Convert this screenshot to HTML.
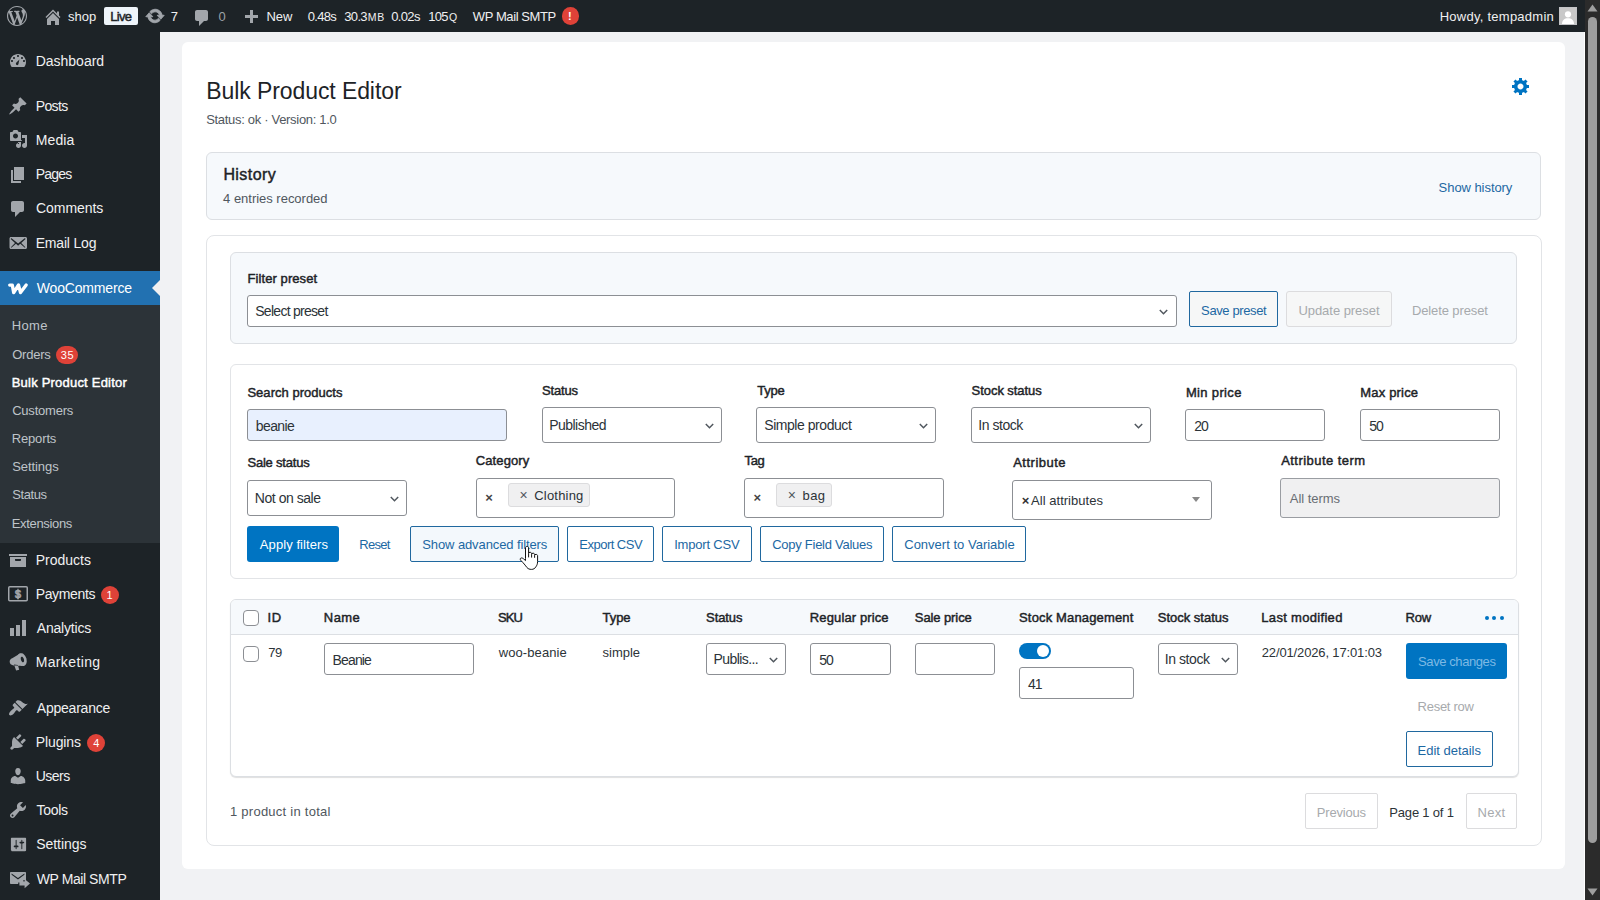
<!DOCTYPE html>
<html lang="en">
<head>
<meta charset="utf-8">
<title>Bulk Product Editor</title>
<style>
html,body{margin:0;padding:0;}
body{width:1600px;height:900px;overflow:hidden;position:relative;background:#f1f2f4;font-family:"Liberation Sans",sans-serif;}
.b{position:absolute;box-sizing:border-box;}
.t{position:absolute;white-space:nowrap;font-family:"Liberation Sans",sans-serif;}
svg{position:absolute;overflow:visible;}
</style>
</head>
<body>
<div class="b" style="left:0px;top:0px;width:1600px;height:32px;background:#1d2327;"></div>
<div class="b" style="left:0px;top:32px;width:160px;height:868px;background:#1d2327;"></div>
<div class="b" style="left:182px;top:42px;width:1383px;height:827px;background:#fff;border-radius:6px;"></div>
<div class="b" style="left:1584px;top:32px;width:1px;height:868px;background:#fff;"></div>
<div class="b" style="left:1585px;top:0px;width:15px;height:900px;background:#2b2b2b;"></div>
<div class="b" style="left:1588px;top:17px;width:9px;height:826px;background:#9e9e9e;border-radius:5px;"></div>
<svg style="left:1587px;top:4px" width="11" height="8" viewBox="0 0 11 8"><path fill="#9e9e9e" d="M5.5 0.5L10.5 7.500H0.500z"/></svg>
<svg style="left:1587px;top:888px" width="11" height="8" viewBox="0 0 11 8"><path fill="#9e9e9e" d="M0.500 0.500H10.500L5.500 7.500z"/></svg>
<svg style="left:7px;top:6px" width="20" height="20" viewBox="0 0 20 20"><path fill="#a2a6ab" fill-rule="evenodd"  d="M20 10c0-5.510-4.490-10-10-10s-10 4.490-10 10 4.490 10 10 10 10-4.490 10-10zM7.780 15.370l-3.410-9.170c0.550-0.020 1.170-0.080 1.170-0.080 0.500-0.060 0.440-1.130-0.060-1.110 0 0-1.450 0.110-2.370 0.110-0.180 0-0.370 0-0.580-0.010 1.580-2.430 4.330-4.010 7.470-4.010 2.330 0 4.450 0.870 6.050 2.340-0.680-0.110-1.650 0.390-1.650 1.580 0 0.740 0.450 1.360 0.900 2.100 0.350 0.610 0.550 1.360 0.550 2.460 0 1.490-1.400 5-1.400 5l-3.030-8.380c0.540-0.020 0.820-0.170 0.820-0.170 0.500-0.050 0.440-1.250-0.060-1.220 0 0-1.440 0.120-2.380 0.120-0.870 0-2.330-0.120-2.330-0.120-0.500-0.030-0.560 1.200-0.060 1.220l0.920 0.080 1.260 3.410zM17.410 10c0.240-0.640 0.740-1.870 0.430-4.250 0.700 1.290 1.050 2.710 1.050 4.250 0 3.290-1.730 6.240-4.400 7.780 0.970-2.590 1.940-5.200 2.920-7.780zM6.100 18.090c-2.980-1.440-4.990-4.550-4.990-8.090 0-1.300 0.230-2.480 0.720-3.590 1.420 3.890 2.840 7.790 4.270 11.680zM10.130 11.460l2.580 6.980c-0.860 0.290-1.760 0.450-2.710 0.450-0.790 0-1.570-0.110-2.290-0.330 0.810-2.380 1.620-4.740 2.420-7.100z"/></svg>
<svg style="left:42.5px;top:6.5px" width="20" height="20" viewBox="0 0 20 20"><path fill="#a2a6ab" fill-rule="evenodd"  d="M16 8.500l1.530 1.530-1.060 1.060-6.470-6.470-6.470 6.470-1.060-1.060 7.530-7.530 4 4v-2h2v4zM10 6.040l6 5.990v5.970h-4v-4h-4v4h-4v-5.970z"/></svg>
<span class="t" style="left:68.04px;top:7px;font-size:13px;line-height:20px;color:#f0f0f1;letter-spacing:-0.03px;">shop</span>
<div class="b" style="left:104px;top:7px;width:34px;height:18px;background:#eef4fa;border-radius:2px;"></div>
<span class="t" style="left:110.33px;top:7px;font-size:13px;line-height:20px;-webkit-text-stroke:0.45px;color:#1d2327;letter-spacing:-0.77px;">Live</span>
<svg style="left:144.7px;top:6.3px" width="20" height="20" viewBox="0 0 20 20"><path fill="#a2a6ab" fill-rule="evenodd" stroke="#a2a6ab" stroke-width="0.900" d="M10.200 3.280c3.530 0 6.430 2.610 6.920 6h2.080l-3.500 4-3.500-4h2.320c-0.450-1.970-2.210-3.450-4.320-3.450-1.450 0-2.730 0.710-3.540 1.780l-1.720-1.970c1.280-1.450 3.160-2.360 5.260-2.360zM9.800 16.720c-3.520 0-6.430-2.610-6.920-6h-2.080l3.500-4c1.170 1.330 2.330 2.670 3.500 4h-2.320c0.450 1.970 2.210 3.450 4.320 3.450 1.450 0 2.730-0.710 3.540-1.780l1.720 1.970c-1.280 1.450-3.160 2.360-5.260 2.360z"/></svg>
<span class="t" style="left:170.73px;top:7px;font-size:13px;line-height:20px;color:#f0f0f1;">7</span>
<svg style="left:192px;top:8.3px" width="20" height="20" viewBox="0 0 20 20"><path fill="#a2a6ab" fill-rule="evenodd"  d="M5 2h9c1.100 0 2 0.900 2 2v7c0 1.100-0.900 2-2 2h-2l-5 5v-5h-2c-1.100 0-2-0.900-2-2v-7c0-1.100 0.900-2 2-2z"/></svg>
<span class="t" style="left:218.39px;top:7px;font-size:13px;line-height:20px;color:#9ca2a7;">0</span>
<svg style="left:240.5px;top:7.5px" width="20" height="20" viewBox="0 0 20 20"><path fill="#a2a6ab" fill-rule="evenodd"  d="M17 7v3h-5v5h-3v-5h-5v-3h5v-5h3v5h5z"/></svg>
<span class="t" style="left:266.53px;top:7px;font-size:13px;line-height:20px;color:#f0f0f1;letter-spacing:-0.04px;">New</span>
<span class="t" style="left:307.69px;top:7px;font-size:13px;line-height:20px;color:#f0f0f1;letter-spacing:-0.68px;">0.48s</span>
<span class="t" style="left:344.30px;top:7px;font-size:13px;line-height:20px;color:#f0f0f1;letter-spacing:-0.68px;">30.3</span>
<span class="t" style="left:367.74px;top:9px;font-size:10.5px;line-height:16px;color:#f0f0f1;letter-spacing:0.70px;">MB</span>
<span class="t" style="left:391.19px;top:7px;font-size:13px;line-height:20px;color:#f0f0f1;letter-spacing:-0.63px;">0.02s</span>
<span class="t" style="left:428.21px;top:7px;font-size:13px;line-height:20px;color:#f0f0f1;letter-spacing:-0.68px;">105</span>
<span class="t" style="left:448.90px;top:9px;font-size:10.5px;line-height:16px;color:#f0f0f1;">Q</span>
<span class="t" style="left:472.84px;top:7px;font-size:13px;line-height:20px;color:#f0f0f1;letter-spacing:-0.41px;">WP Mail SMTP</span>
<div class="b" style="left:561.5px;top:7.2px;width:17.6px;height:17.6px;background:#df4238;border-radius:50%;"></div>
<span class="t" style="left:568.06px;top:8px;font-size:11px;line-height:16px;font-weight:700;color:#fff;">!</span>
<span class="t" style="left:1439.73px;top:7px;font-size:13px;line-height:20px;color:#f0f0f1;letter-spacing:0.25px;">Howdy, tempadmin</span>
<div class="b" style="left:1559px;top:7px;width:18px;height:18px;background:#c3c4c7;"></div>
<svg style="left:1560px;top:8px" width="16" height="16" viewBox="0 0 16 16"><rect width="16" height="16" fill="#c8c8c8"/><circle cx="8" cy="6.300" r="3.100" fill="#fff"/><path fill="#fff" d="M2 16c0-4 2.500-5.800 6-5.800s6 1.800 6 5.800z"/></svg>
<svg style="left:8px;top:51px" width="20" height="20" viewBox="0 0 20 20"><path fill="#a2a6ab" fill-rule="evenodd"  d="M3.760 16h12.480c1.100-1.370 1.760-3.110 1.760-5 0-4.420-3.580-8-8-8s-8 3.580-8 8c0 1.890 0.660 3.630 1.760 5zM10 4c0.550 0 1 0.450 1 1s-0.450 1-1 1-1-0.450-1-1 0.450-1 1-1zM6 6c0.550 0 1 0.450 1 1s-0.450 1-1 1-1-0.450-1-1 0.450-1 1-1zM14 6c0.550 0 1 0.450 1 1s-0.450 1-1 1-1-0.450-1-1 0.450-1 1-1zM8.370 11.620c0.810-0.750 3.050-3.120 3.050-3.120s-0.690 3.150-0.880 4.250c-0.190 1.090-1.060 1.690-1.880 1.250s-1.100-1.620-0.290-2.380zM4 9c0.550 0 1 0.450 1 1s-0.450 1-1 1-1-0.450-1-1 0.450-1 1-1zM16 9c0.550 0 1 0.450 1 1s-0.450 1-1 1-1-0.450-1-1 0.450-1 1-1z"/></svg>
<span class="t" style="left:35.65px;top:51px;font-size:14px;line-height:21px;color:#f0f0f1;">Dashboard</span>
<svg style="left:8px;top:96px" width="20" height="20" viewBox="0 0 20 20"><path fill="#a2a6ab" fill-rule="evenodd"  d="M10.440 3.020l1.820-1.820 6.360 6.350-1.830 1.820c-1.050-0.680-2.480-0.570-3.410 0.360l-0.750 0.750c-0.920 0.930-1.040 2.350-0.350 3.410l-1.830 1.820-2.410-2.410-2.800 2.790c-0.420 0.420-3.380 2.710-3.800 2.290s1.860-3.390 2.280-3.810l2.790-2.790-2.410-2.410 1.830-1.820c1.050 0.690 2.480 0.570 3.400-0.360l0.750-0.750c0.930-0.920 1.050-2.350 0.360-3.400z"/></svg>
<span class="t" style="left:35.65px;top:96px;font-size:14px;line-height:21px;color:#f0f0f1;letter-spacing:-0.57px;">Posts</span>
<svg style="left:7.5px;top:129px" width="20" height="20" viewBox="0 0 20 20"><path fill="#a2a6ab" fill-rule="evenodd"  d="M13 11v-7c0-0.550-0.450-1-1-1h-1.330l-1.340-2h-3.660l-1.340 2h-1.330c-0.550 0-1 0.450-1 1v7c0 0.550 0.450 1 1 1h10c0.550 0 1-0.450 1-1zM7.500 4.500c1.380 0 2.500 1.120 2.500 2.500s-1.120 2.500-2.500 2.500-2.500-1.120-2.500-2.500 1.120-2.500 2.500-2.500zM14 6h5v10.500c0 1.380-1.120 2.500-2.500 2.500s-2.500-1.120-2.500-2.500 1.120-2.500 2.500-2.500c0.170 0 0.340 0.020 0.500 0.050v-5.050h-3v-3zM10 14v-1h3v3.500c0 1.380-1.120 2.500-2.500 2.500s-2.500-1.120-2.500-2.500 1.120-2.500 2.500-2.500c0.170 0 0.340 0.020 0.500 0.050v0.950h-1z"/></svg>
<span class="t" style="left:35.65px;top:130px;font-size:14px;line-height:21px;color:#f0f0f1;letter-spacing:0.15px;">Media</span>
<svg style="left:8px;top:164.5px" width="20" height="20" viewBox="0 0 20 20"><path fill="#a2a6ab" fill-rule="evenodd"  d="M6 15v-13h10v13h-10zM5 16h8v2h-10v-13h2v11z"/></svg>
<span class="t" style="left:35.65px;top:164px;font-size:14px;line-height:21px;color:#f0f0f1;letter-spacing:-0.76px;">Pages</span>
<svg style="left:8px;top:198.5px" width="20" height="20" viewBox="0 0 20 20"><path fill="#a2a6ab" fill-rule="evenodd"  d="M5 2h9c1.100 0 2 0.900 2 2v7c0 1.100-0.900 2-2 2h-2l-5 5v-5h-2c-1.100 0-2-0.900-2-2v-7c0-1.100 0.900-2 2-2z"/></svg>
<span class="t" style="left:36.09px;top:198px;font-size:14px;line-height:21px;color:#f0f0f1;letter-spacing:-0.07px;">Comments</span>
<svg style="left:8.3px;top:233px" width="20" height="20" viewBox="0 0 20 20"><path fill="#a2a6ab" fill-rule="evenodd"  d="M19 14.500v-9c0-0.830-0.670-1.500-1.500-1.500h-14.500c-0.830 0-1.500 0.670-1.500 1.500v9c0 0.830 0.670 1.500 1.500 1.500h14.500c0.830 0 1.500-0.670 1.500-1.500zM17.310 5.390c0.330 0.330 0.150 0.670-0.030 0.840l-4.060 3.720 3.900 4.060c0.120 0.140 0.200 0.360 0.060 0.510-0.130 0.160-0.430 0.150-0.560 0.050l-4.370-3.730-2.140 1.950-2.130-1.950-4.370 3.730c-0.130 0.100-0.430 0.110-0.560-0.050-0.140-0.150-0.060-0.370 0.060-0.510l3.900-4.060-4.060-3.720c-0.180-0.170-0.360-0.510-0.030-0.840s0.670-0.170 0.950 0.070l6.240 5.040 6.250-5.040c0.280-0.240 0.620-0.400 0.950-0.070z"/></svg>
<span class="t" style="left:35.65px;top:233px;font-size:14px;line-height:21px;color:#f0f0f1;letter-spacing:-0.18px;">Email Log</span>
<div class="b" style="left:0px;top:271px;width:160px;height:34px;background:#2271b1;"></div>
<svg style="left:152px;top:280px" width="8" height="16" viewBox="0 0 8 16"><path fill="#f0f0f1" d="M8 0L0 8l8 8z"/></svg>
<svg style="left:8px;top:282.500px" width="20" height="11.500" viewBox="0 0 20 11.500"><path fill="none" stroke="#fff" stroke-width="3.300" stroke-linecap="round" stroke-linejoin="round" d="M1.700 2.100H4.300L5.700 9.600L10.500 2L12.500 9.600L18.200 2"/></svg>
<span class="t" style="left:36.74px;top:278px;font-size:14px;line-height:21px;color:#fff;letter-spacing:-0.17px;">WooCommerce</span>
<div class="b" style="left:0px;top:305px;width:160px;height:238px;background:#2c3338;"></div>
<span class="t" style="left:11.73px;top:316px;font-size:13px;line-height:20px;color:#bfc4c9;letter-spacing:0.35px;">Home</span>
<span class="t" style="left:12.18px;top:345px;font-size:13px;line-height:20px;color:#bfc4c9;letter-spacing:-0.21px;">Orders</span>
<div class="b" style="left:56.3px;top:346px;width:21.7px;height:18px;background:#df4238;border-radius:9px;"></div>
<span class="t" style="left:60.78px;top:347px;font-size:11px;line-height:16px;color:#fff;letter-spacing:0.70px;">35</span>
<span class="t" style="left:11.73px;top:373px;font-size:13px;line-height:20px;-webkit-text-stroke:0.45px;color:#fff;letter-spacing:0.21px;">Bulk Product Editor</span>
<span class="t" style="left:12.14px;top:401px;font-size:13px;line-height:20px;color:#bfc4c9;letter-spacing:-0.20px;">Customers</span>
<span class="t" style="left:11.73px;top:429px;font-size:13px;line-height:20px;color:#bfc4c9;letter-spacing:-0.15px;">Reports</span>
<span class="t" style="left:12.21px;top:457px;font-size:13px;line-height:20px;color:#bfc4c9;letter-spacing:-0.07px;">Settings</span>
<span class="t" style="left:12.21px;top:485px;font-size:13px;line-height:20px;color:#bfc4c9;letter-spacing:-0.40px;">Status</span>
<span class="t" style="left:11.73px;top:514px;font-size:13px;line-height:20px;color:#bfc4c9;letter-spacing:-0.33px;">Extensions</span>
<svg style="left:8.3px;top:550px" width="20" height="20" viewBox="0 0 20 20"><path fill="#a2a6ab" fill-rule="evenodd"  d="M19 4v2h-18v-2h18zM2 7h16v10h-16v-10zM13 10v-1h-6v1c0 0.550 0.450 1 1 1h4c0.550 0 1-0.450 1-1z"/></svg>
<span class="t" style="left:35.65px;top:550px;font-size:14px;line-height:21px;color:#f0f0f1;">Products</span>
<svg style="left:8px;top:586px" width="20" height="16" viewBox="0 0 20 16"><rect x="0.750" y="0.750" width="18.500" height="14" rx="1" fill="none" stroke="#a2a6ab" stroke-width="1.500"/><text x="10" y="12.200" text-anchor="middle" font-family="Liberation Sans, sans-serif" font-weight="700" font-size="11.500" fill="#a2a6ab" stroke="#a2a6ab" stroke-width="0.400">$</text><path d="M10 2.800v10.400" stroke="#a2a6ab" stroke-width="1.100"/></svg>
<span class="t" style="left:35.65px;top:584px;font-size:14px;line-height:21px;color:#f0f0f1;letter-spacing:-0.34px;">Payments</span>
<div class="b" style="left:101px;top:586px;width:18px;height:18px;background:#df4238;border-radius:9px;"></div>
<span class="t" style="left:106.56px;top:587px;font-size:11px;line-height:16px;color:#fff;">1</span>
<svg style="left:8px;top:618px" width="20" height="20" viewBox="0 0 20 20"><path fill="#a2a6ab" fill-rule="evenodd"  d="M18 18v-16h-4v16h4zM12 18v-11h-4v11h4zM6 18v-8h-4v8h4z"/></svg>
<span class="t" style="left:36.77px;top:618px;font-size:14px;line-height:21px;color:#f0f0f1;letter-spacing:-0.20px;">Analytics</span>
<svg style="left:8px;top:652px" width="20" height="20" viewBox="0 0 20 20"><path fill="#a2a6ab" d="M12.2 1.6L4.2 6.300C2.600 6.800 1.500 8.300 1.700 10.100C1.900 11.900 3.100 13.100 4.800 13.200L14.800 14.100zM6 12.600L9.900 13L11.200 17.800L8.100 18.500z"/><path fill="#a2a6ab" d="M18.30 6.28L18.62 7.72L18.71 9.15L18.57 10.51L18.19 11.71L17.61 12.72L16.84 13.46L15.93 13.91L14.92 14.05L13.87 13.86L12.83 13.35L11.84 12.56L10.96 11.52L10.23 10.29L9.70 8.92L9.38 7.48L9.29 6.05L9.43 4.69L9.81 3.49L10.39 2.48L11.16 1.74L12.07 1.29L13.08 1.15L14.13 1.34L15.17 1.85L16.16 2.64L17.04 3.68L17.77 4.91z"/><path fill="#1d2327" d="M15.83 7.06L15.99 7.69L16.06 8.31L16.05 8.89L15.96 9.39L15.79 9.81L15.55 10.11L15.25 10.27L14.91 10.30L14.54 10.19L14.17 9.94L13.81 9.57L13.48 9.10L13.19 8.54L12.97 7.94L12.81 7.31L12.74 6.69L12.75 6.11L12.84 5.61L13.01 5.19L13.25 4.89L13.55 4.73L13.89 4.70L14.26 4.81L14.63 5.06L14.99 5.43L15.32 5.90L15.61 6.46z"/></svg>
<span class="t" style="left:35.65px;top:652px;font-size:14px;line-height:21px;color:#f0f0f1;letter-spacing:0.37px;">Marketing</span>
<svg style="left:8px;top:697.5px" width="20" height="20" viewBox="0 0 20 20"><path fill="#a2a6ab" fill-rule="evenodd"  d="M14.48 11.06L7.41 3.99l1.5-1.5c.5-.56 2.3-.47 3.51.32 1.21.8 1.43 1.28 2.91 2.1 1.18.64 2.45 1.26 4.45.85zm-.71.71L6.700 4.700 4.930 6.470c-.39.39-.39 1.020 0 1.410l1.060 1.060c.39.39.39 1.030 0 1.420-.6.6-1.430 1.110-2.210 1.690-.35.26-.7.53-1.010.84C1.430 14.230.4 16.080 1.400 17.070c.99 1 2.840-.03 4.180-1.360.31-.31.58-.66.85-1.020.57-.78 1.080-1.610 1.690-2.210.39-.39 1.020-.39 1.410 0l1.060 1.060c.39.39 1.020.39 1.410 0z"/></svg>
<span class="t" style="left:36.77px;top:698px;font-size:14px;line-height:21px;color:#f0f0f1;letter-spacing:-0.22px;">Appearance</span>
<svg style="left:8px;top:731.5px" width="20" height="20" viewBox="0 0 20 20"><path fill="#a2a6ab" fill-rule="evenodd"  d="M13.11 4.360L9.870 7.600 8 5.730l3.240-3.240c.35-.34 1.050-.2 1.560.32.52.51.66 1.210.31 1.550zm-8 1.770l.91-1.120 9.010 9.010-1.190.84c-.71.71-2.630 1.160-3.820 1.160H6.140L4.900 17.260c-.59.59-1.540.59-2.120 0-.59-.58-.59-1.530 0-2.120l1.240-1.240v-3.880c0-1.130.4-3.190 1.090-3.890zm7.260 3.970l3.240-3.240c.34-.35 1.040-.21 1.550.31.52.51.66 1.210.31 1.550l-3.240 3.250z"/></svg>
<span class="t" style="left:35.65px;top:732px;font-size:14px;line-height:21px;color:#f0f0f1;letter-spacing:-0.08px;">Plugins</span>
<div class="b" style="left:87px;top:734px;width:18px;height:18px;background:#df4238;border-radius:9px;"></div>
<span class="t" style="left:93.15px;top:735px;font-size:11px;line-height:16px;color:#fff;">4</span>
<svg style="left:8px;top:765.5px" width="20" height="20" viewBox="0 0 20 20"><path fill="#a2a6ab" fill-rule="evenodd"  d="M10 9.250c-2.270 0-2.730-3.440-2.730-3.440-0.270-1.790 0.550-3.810 2.700-3.810 2.160 0 2.980 2.020 2.710 3.810 0 0-0.410 3.440-2.680 3.440zM10 11.820l2.720-1.820c2.390 0 4.520 2.330 4.520 4.530v2.490s-3.650 1.130-7.240 1.130c-3.650 0-7.240-1.130-7.240-1.130v-2.490c0-2.250 1.940-4.480 4.470-4.480z"/></svg>
<span class="t" style="left:35.72px;top:766px;font-size:14px;line-height:21px;color:#f0f0f1;letter-spacing:-0.52px;">Users</span>
<svg style="left:8px;top:799.5px" width="20" height="20" viewBox="0 0 20 20"><path fill="#a2a6ab" fill-rule="evenodd"  d="M16.680 9.770c-1.340 1.340-3.300 1.670-4.950 0.990l-5.410 6.520c-0.990 0.990-2.590 0.990-3.580 0s-0.990-2.590 0-3.570l6.520-5.420c-0.680-1.650-0.350-3.610 0.990-4.950 1.280-1.280 3.120-1.620 4.720-1.060l-2.890 2.890 2.820 2.820 2.860-2.870c0.530 1.580 0.180 3.390-1.080 4.650zM3.810 16.210c0.400 0.390 1.040 0.390 1.430 0 0.400-0.400 0.400-1.040 0-1.430-0.390-0.400-1.030-0.400-1.430 0-0.390 0.390-0.390 1.030 0 1.430z"/></svg>
<span class="t" style="left:36.49px;top:800px;font-size:14px;line-height:21px;color:#f0f0f1;letter-spacing:-0.27px;">Tools</span>
<svg style="left:8.9px;top:834.5px" width="19" height="19" viewBox="0 0 20 20"><path fill="#a2a6ab" fill-rule="evenodd"  d="M18 16V4c0-.55-.45-1-1-1H3c-.55 0-1 .45-1 1v12c0 .55.45 1 1 1h14c.55 0 1-.45 1-1zM8 11h1c.55 0 1 .45 1 1s-.45 1-1 1H8v1.500c0 .28-.22.5-.5.5s-.5-.22-.5-.5V13H6c-.55 0-1-.45-1-1s.45-1 1-1h1V5.500c0-.28.22-.5.5-.5s.5.22.5.5V11zm5-2h-1c-.55 0-1-.45-1-1s.45-1 1-1h1V5.500c0-.28.22-.5.5-.5s.5.22.5.5V7h1c.55 0 1 .45 1 1s-.45 1-1 1h-1v5.500c0 .28-.22.5-.5.5s-.5-.22-.5-.5V9z"/></svg>
<span class="t" style="left:36.16px;top:834px;font-size:14px;line-height:21px;color:#f0f0f1;letter-spacing:-0.04px;">Settings</span>
<svg style="left:10px;top:871.500px" width="20" height="16.500" viewBox="0 0 20 16.500"><path fill="#a2a6ab" d="M0 0.800C0 0.400 0.400 0 0.800 0h14.400c0.400 0 0.800 0.400 0.800 0.800v7.200h-2.600v2.600h-5.200v1.400H0.800C0.400 12 0 11.600 0 11.200zM1.600 1.500v1.300L8 7.400l6.400-4.600V1.500L8 6z"/><path fill="#a2a6ab" d="M9.400 9.600h5.200V7l5.400 4.600-5.400 4.600v-2.700H9.400z"/></svg>
<span class="t" style="left:36.74px;top:869px;font-size:14px;line-height:21px;color:#f0f0f1;letter-spacing:-0.42px;">WP Mail SMTP</span>
<span class="t" style="left:206.31px;top:74px;font-size:23px;line-height:34px;color:#1d2327;letter-spacing:-0.09px;">Bulk Product Editor</span>
<span class="t" style="left:206.21px;top:110px;font-size:13px;line-height:20px;color:#50575e;letter-spacing:-0.31px;">Status: ok · Version: 1.0</span>
<svg style="left:1511px;top:76px" width="20" height="20" viewBox="0 0 20 20"><path fill="#0074c2" fill-rule="evenodd"  d="M18 12h-2.180c-0.170 0.700-0.440 1.350-0.810 1.930l1.540 1.540-2.100 2.100-1.540-1.540c-0.580 0.360-1.230 0.630-1.910 0.790v2.180h-3v-2.180c-0.680-0.160-1.330-0.430-1.910-0.790l-1.540 1.540-2.120-2.120 1.540-1.540c-0.360-0.580-0.630-1.230-0.790-1.910h-2.180v-2.970h2.170c0.160-0.700 0.440-1.350 0.800-1.940l-1.540-1.540 2.100-2.100 1.540 1.540c0.580-0.370 1.240-0.640 1.930-0.810v-2.180h3v2.170c0.680 0.160 1.330 0.430 1.910 0.790l1.540-1.540 2.120 2.120-1.540 1.540c0.360 0.590 0.640 1.240 0.800 1.940h2.170v2.980zM9.500 13.500c1.660 0 3-1.340 3-3s-1.340-3-3-3-3 1.340-3 3 1.340 3 3 3z"/></svg>
<div class="b" style="left:206px;top:152px;width:1335px;height:68px;background:#f6f9fc;border:1px solid #dcdfe3;border-radius:6px;"></div>
<span class="t" style="left:223.39px;top:163px;font-size:16px;line-height:24px;-webkit-text-stroke:0.45px;color:#1d2327;letter-spacing:0.44px;">History</span>
<span class="t" style="left:223.10px;top:189px;font-size:13px;line-height:20px;color:#50575e;letter-spacing:-0.02px;">4 entries recorded</span>
<span class="t" style="left:1438.61px;top:178px;font-size:13px;line-height:20px;color:#1c68a3;letter-spacing:-0.06px;">Show history</span>
<div class="b" style="left:205.5px;top:235px;width:1336px;height:611px;background:#fff;border:1px solid #e2e4e7;border-radius:8px;"></div>
<div class="b" style="left:230px;top:252px;width:1287px;height:92px;background:#f6f9fc;border:1px solid #dcdfe3;border-radius:6px;"></div>
<span class="t" style="left:247.53px;top:269px;font-size:13px;line-height:20px;-webkit-text-stroke:0.45px;color:#1d2327;letter-spacing:0.08px;">Filter preset</span>
<div class="b" style="left:247px;top:295px;width:930px;height:32px;background:#fff;border:1px solid #8c8f94;border-radius:3px;"></div>
<span class="t" style="left:255.26px;top:301px;font-size:14px;line-height:21px;color:#2c3338;letter-spacing:-0.72px;">Select preset</span>
<svg style="left:1159.3px;top:309px" width="9" height="6" viewBox="0 0 9 6"><path d="M0.800 1l3.700 3.700L8.200 1" fill="none" stroke="#50575e" stroke-width="1.500"/></svg>
<div class="b" style="left:1189px;top:291px;width:89px;height:36px;background:#f6f7f7;border:1px solid #20689f;border-radius:2px;"></div>
<span class="t" style="left:1201.11px;top:301px;font-size:13px;line-height:20px;color:#1c68a3;letter-spacing:-0.39px;">Save preset</span>
<div class="b" style="left:1286px;top:291px;width:106px;height:36px;background:#f6f7f7;border:1px solid #dcdcde;border-radius:3px;"></div>
<span class="t" style="left:1298.40px;top:301px;font-size:13px;line-height:20px;color:#a7aaad;letter-spacing:-0.04px;">Update preset</span>
<span class="t" style="left:1411.93px;top:301px;font-size:13px;line-height:20px;color:#a7aaad;letter-spacing:-0.11px;">Delete preset</span>
<div class="b" style="left:230px;top:364px;width:1287px;height:214.5px;background:#fff;border:1px solid #e2e4e7;border-radius:6px;"></div>
<span class="t" style="left:247.41px;top:383px;font-size:13px;line-height:20px;-webkit-text-stroke:0.45px;color:#1d2327;letter-spacing:0.03px;">Search products</span>
<span class="t" style="left:542.11px;top:381px;font-size:13px;line-height:20px;-webkit-text-stroke:0.45px;color:#1d2327;letter-spacing:-0.20px;">Status</span>
<span class="t" style="left:757.31px;top:381px;font-size:13px;line-height:20px;-webkit-text-stroke:0.45px;color:#1d2327;letter-spacing:-0.24px;">Type</span>
<span class="t" style="left:971.61px;top:381px;font-size:13px;line-height:20px;-webkit-text-stroke:0.45px;color:#1d2327;letter-spacing:-0.06px;">Stock status</span>
<span class="t" style="left:1185.93px;top:383px;font-size:13px;line-height:20px;-webkit-text-stroke:0.45px;color:#1d2327;letter-spacing:0.34px;">Min price</span>
<span class="t" style="left:1360.33px;top:383px;font-size:13px;line-height:20px;-webkit-text-stroke:0.45px;color:#1d2327;letter-spacing:0.17px;">Max price</span>
<span class="t" style="left:247.41px;top:453px;font-size:13px;line-height:20px;-webkit-text-stroke:0.45px;color:#1d2327;letter-spacing:-0.20px;">Sale status</span>
<span class="t" style="left:475.74px;top:451px;font-size:13px;line-height:20px;-webkit-text-stroke:0.45px;color:#1d2327;letter-spacing:0.11px;">Category</span>
<span class="t" style="left:744.61px;top:451px;font-size:13px;line-height:20px;-webkit-text-stroke:0.45px;color:#1d2327;letter-spacing:-0.47px;">Tag</span>
<span class="t" style="left:1013.17px;top:453px;font-size:13px;line-height:20px;-webkit-text-stroke:0.45px;color:#1d2327;letter-spacing:0.50px;">Attribute</span>
<span class="t" style="left:1281.17px;top:451px;font-size:13px;line-height:20px;-webkit-text-stroke:0.45px;color:#1d2327;letter-spacing:0.46px;">Attribute term</span>
<div class="b" style="left:247px;top:409px;width:260px;height:32px;background:#e8f0fe;border:1px solid #8c8f94;border-radius:3px;"></div>
<span class="t" style="left:255.75px;top:416px;font-size:14px;line-height:21px;color:#2c3338;letter-spacing:-0.58px;">beanie</span>
<div class="b" style="left:542px;top:407px;width:180px;height:36px;background:#fff;border:1px solid #8c8f94;border-radius:3px;"></div>
<span class="t" style="left:549.25px;top:415px;font-size:14px;line-height:21px;color:#2c3338;letter-spacing:-0.54px;">Published</span>
<svg style="left:704.8px;top:423px" width="9" height="6" viewBox="0 0 9 6"><path d="M0.800 1l3.700 3.700L8.200 1" fill="none" stroke="#50575e" stroke-width="1.500"/></svg>
<div class="b" style="left:756px;top:407px;width:180px;height:36px;background:#fff;border:1px solid #8c8f94;border-radius:3px;"></div>
<span class="t" style="left:764.26px;top:415px;font-size:14px;line-height:21px;color:#2c3338;letter-spacing:-0.45px;">Simple product</span>
<svg style="left:918.8px;top:423px" width="9" height="6" viewBox="0 0 9 6"><path d="M0.800 1l3.700 3.700L8.200 1" fill="none" stroke="#50575e" stroke-width="1.500"/></svg>
<div class="b" style="left:971px;top:407px;width:180px;height:36px;background:#fff;border:1px solid #8c8f94;border-radius:3px;"></div>
<span class="t" style="left:978.36px;top:415px;font-size:14px;line-height:21px;color:#2c3338;letter-spacing:-0.48px;">In stock</span>
<svg style="left:1133.8px;top:423px" width="9" height="6" viewBox="0 0 9 6"><path d="M0.800 1l3.700 3.700L8.200 1" fill="none" stroke="#50575e" stroke-width="1.500"/></svg>
<div class="b" style="left:1185px;top:409px;width:140px;height:32px;background:#fff;border:1px solid #8c8f94;border-radius:3px;"></div>
<span class="t" style="left:1194.20px;top:416px;font-size:14px;line-height:21px;color:#2c3338;letter-spacing:-0.98px;">20</span>
<div class="b" style="left:1360px;top:409px;width:140px;height:32px;background:#fff;border:1px solid #8c8f94;border-radius:3px;"></div>
<span class="t" style="left:1369.34px;top:416px;font-size:14px;line-height:21px;color:#2c3338;letter-spacing:-1.00px;">50</span>
<div class="b" style="left:247px;top:480px;width:160px;height:36px;background:#fff;border:1px solid #8c8f94;border-radius:3px;"></div>
<span class="t" style="left:254.75px;top:488px;font-size:14px;line-height:21px;color:#2c3338;letter-spacing:-0.45px;">Not on sale</span>
<svg style="left:390px;top:496px" width="9" height="6" viewBox="0 0 9 6"><path d="M0.800 1l3.700 3.700L8.200 1" fill="none" stroke="#50575e" stroke-width="1.500"/></svg>
<div class="b" style="left:475.5px;top:478px;width:199.5px;height:40px;background:#fff;border:1px solid #8c8f94;border-radius:3px;"></div>
<span class="t" style="left:485.35px;top:488px;font-size:13px;line-height:20px;font-weight:700;color:#444;">×</span>
<div class="b" style="left:507.5px;top:483px;width:82px;height:24px;background:#f0f0f1;border:1px solid #dcdcde;border-radius:3px;"></div>
<span class="t" style="left:519.43px;top:485px;font-size:14px;line-height:21px;color:#50575e;">×</span>
<span class="t" style="left:534.24px;top:486px;font-size:13px;line-height:20px;color:#2c3338;letter-spacing:0.20px;">Clothing</span>
<div class="b" style="left:744px;top:478px;width:200px;height:40px;background:#fff;border:1px solid #8c8f94;border-radius:3px;"></div>
<span class="t" style="left:753.60px;top:488px;font-size:13px;line-height:20px;font-weight:700;color:#444;">×</span>
<div class="b" style="left:776.25px;top:483px;width:55.5px;height:24px;background:#f0f0f1;border:1px solid #dcdcde;border-radius:3px;"></div>
<span class="t" style="left:787.68px;top:485px;font-size:14px;line-height:21px;color:#50575e;">×</span>
<span class="t" style="left:802.56px;top:486px;font-size:13px;line-height:20px;color:#2c3338;letter-spacing:0.41px;">bag</span>
<div class="b" style="left:1012px;top:480px;width:200px;height:40px;background:#fff;border:1px solid #8c8f94;border-radius:3px;"></div>
<span class="t" style="left:1021.85px;top:491px;font-size:13px;line-height:20px;font-weight:700;color:#333;">×</span>
<span class="t" style="left:1031.12px;top:491px;font-size:13px;line-height:20px;color:#2c3338;letter-spacing:0.02px;">All attributes</span>
<svg style="left:1192px;top:497px" width="8" height="5" viewBox="0 0 8 5"><path fill="#888" d="M0 0h8L4 5z"/></svg>
<div class="b" style="left:1280px;top:478px;width:220px;height:40px;background:#f0f0f1;border:1px solid #9a9da2;border-radius:3px;"></div>
<span class="t" style="left:1289.87px;top:489px;font-size:13px;line-height:20px;color:#686d73;letter-spacing:-0.06px;">All terms</span>
<div class="b" style="left:247px;top:526px;width:92px;height:36px;background:#0074c2;border-radius:3px;"></div>
<span class="t" style="left:259.87px;top:535px;font-size:13px;line-height:20px;color:#fff;letter-spacing:0.07px;">Apply filters</span>
<span class="t" style="left:359.33px;top:535px;font-size:13px;line-height:20px;color:#1c68a3;letter-spacing:-0.74px;">Reset</span>
<div class="b" style="left:410px;top:526px;width:149px;height:36px;background:#f3f8fc;border:1px solid #20689f;border-radius:2px;"></div>
<span class="t" style="left:422.31px;top:535px;font-size:13px;line-height:20px;color:#1c68a3;letter-spacing:-0.11px;">Show advanced filters</span>
<div class="b" style="left:567px;top:526px;width:87px;height:36px;background:#fff;border:1px solid #20689f;border-radius:2px;"></div>
<span class="t" style="left:579.33px;top:535px;font-size:13px;line-height:20px;color:#1c68a3;letter-spacing:-0.52px;">Export CSV</span>
<div class="b" style="left:662px;top:526px;width:90px;height:36px;background:#fff;border:1px solid #20689f;border-radius:2px;"></div>
<span class="t" style="left:674.20px;top:535px;font-size:13px;line-height:20px;color:#1c68a3;letter-spacing:-0.20px;">Import CSV</span>
<div class="b" style="left:760px;top:526px;width:124px;height:36px;background:#fff;border:1px solid #20689f;border-radius:2px;"></div>
<span class="t" style="left:772.24px;top:535px;font-size:13px;line-height:20px;color:#1c68a3;letter-spacing:-0.27px;">Copy Field Values</span>
<div class="b" style="left:892px;top:526px;width:134px;height:36px;background:#fff;border:1px solid #20689f;border-radius:2px;"></div>
<span class="t" style="left:904.24px;top:535px;font-size:13px;line-height:20px;color:#1c68a3;letter-spacing:0.01px;">Convert to Variable</span>
<svg style="left:519px;top:545px" width="20" height="26" viewBox="0 0 20 26"><path fill="#fff" stroke="#111" stroke-width="1" stroke-linejoin="round" d="M6.500 13.500V2.900C6.500 1.900 7.200 1.400 8 1.400C8.900 1.400 9.600 1.900 9.600 2.900V8.200C9.600 7.600 10.200 7.300 11 7.300C11.900 7.300 12.600 7.800 12.600 8.600V9.200C12.600 8.600 13.200 8.200 14 8.200C14.900 8.200 15.600 8.700 15.600 9.500V10.200C15.600 9.700 16.200 9.400 17 9.400C17.900 9.400 18.600 9.900 18.600 10.800V16.500C18.600 19 17.800 20.600 16.900 21.800C16 23.400 14.500 24.400 12.500 24.400C10.500 24.400 9 23.800 8 22.600C6.500 20.500 4 17.500 2.200 15.800C1.200 14.800 0.900 13.900 1.600 13.300C2.400 12.600 3.600 13 4.500 13.800L6.500 15.600Z"/><path d="M9.600 8.200V12.400M12.600 9.200V12.600M15.600 10.200V12.800" stroke="#111" stroke-width="1" fill="none"/></svg>
<div class="b" style="left:230px;top:599px;width:1288.5px;height:177.5px;background:#fff;border:1px solid #dcdfe3;border-radius:6px;box-shadow:0 1px 1px rgba(0,0,0,.13);"></div>
<div class="b" style="left:231px;top:600px;width:1286.5px;height:34.5px;background:#f6f9fc;border-bottom:1px solid #dcdfe3;border-radius:5px 5px 0 0;"></div>
<div class="b" style="left:243px;top:610px;width:16px;height:16px;background:#fff;border:1px solid #8c8f94;border-radius:4px;"></div>
<div class="b" style="left:243px;top:646px;width:16px;height:16px;background:#fff;border:1px solid #8c8f94;border-radius:4px;"></div>
<span class="t" style="left:267.45px;top:608px;font-size:13px;line-height:20px;-webkit-text-stroke:0.45px;color:#1d2327;letter-spacing:0.70px;">ID</span>
<span class="t" style="left:323.83px;top:608px;font-size:13px;line-height:20px;-webkit-text-stroke:0.45px;color:#1d2327;letter-spacing:0.44px;">Name</span>
<span class="t" style="left:498.06px;top:608px;font-size:13px;line-height:20px;-webkit-text-stroke:0.45px;color:#1d2327;letter-spacing:-1.00px;">SKU</span>
<span class="t" style="left:602.61px;top:608px;font-size:13px;line-height:20px;-webkit-text-stroke:0.45px;color:#1d2327;letter-spacing:-0.07px;">Type</span>
<span class="t" style="left:706.06px;top:608px;font-size:13px;line-height:20px;-webkit-text-stroke:0.45px;color:#1d2327;letter-spacing:-0.09px;">Status</span>
<span class="t" style="left:809.83px;top:608px;font-size:13px;line-height:20px;-webkit-text-stroke:0.45px;color:#1d2327;letter-spacing:0.12px;">Regular price</span>
<span class="t" style="left:914.81px;top:608px;font-size:13px;line-height:20px;-webkit-text-stroke:0.45px;color:#1d2327;letter-spacing:-0.09px;">Sale price</span>
<span class="t" style="left:1019.06px;top:608px;font-size:13px;line-height:20px;-webkit-text-stroke:0.45px;color:#1d2327;letter-spacing:0.15px;">Stock Management</span>
<span class="t" style="left:1157.81px;top:608px;font-size:13px;line-height:20px;-webkit-text-stroke:0.45px;color:#1d2327;letter-spacing:-0.01px;">Stock status</span>
<span class="t" style="left:1261.33px;top:608px;font-size:13px;line-height:20px;-webkit-text-stroke:0.45px;color:#1d2327;letter-spacing:0.31px;">Last modified</span>
<span class="t" style="left:1405.58px;top:608px;font-size:13px;line-height:20px;-webkit-text-stroke:0.45px;color:#1d2327;letter-spacing:-0.19px;">Row</span>
<div class="b" style="left:1485px;top:615.7px;width:4.2px;height:4.2px;background:#0074c2;border-radius:50%;"></div>
<div class="b" style="left:1492.3px;top:615.7px;width:4.2px;height:4.2px;background:#0074c2;border-radius:50%;"></div>
<div class="b" style="left:1499.6px;top:615.7px;width:4.2px;height:4.2px;background:#0074c2;border-radius:50%;"></div>
<span class="t" style="left:268.23px;top:643px;font-size:13px;line-height:20px;color:#2c3338;letter-spacing:-0.34px;">79</span>
<div class="b" style="left:324px;top:643px;width:150px;height:32px;background:#fff;border:1px solid #8c8f94;border-radius:3px;"></div>
<span class="t" style="left:332.50px;top:650px;font-size:14px;line-height:21px;color:#2c3338;letter-spacing:-0.84px;">Beanie</span>
<span class="t" style="left:498.67px;top:643px;font-size:13px;line-height:20px;color:#2c3338;letter-spacing:0.10px;">woo-beanie</span>
<span class="t" style="left:602.54px;top:643px;font-size:13px;line-height:20px;color:#2c3338;">simple</span>
<div class="b" style="left:706px;top:643px;width:80px;height:32px;background:#fff;border:1px solid #8c8f94;border-radius:3px;"></div>
<span class="t" style="left:713.50px;top:649px;font-size:14px;line-height:21px;color:#2c3338;letter-spacing:-0.57px;">Publis...</span>
<svg style="left:768.8px;top:656.5px" width="9" height="6" viewBox="0 0 9 6"><path d="M0.800 1l3.700 3.700L8.200 1" fill="none" stroke="#50575e" stroke-width="1.500"/></svg>
<div class="b" style="left:810px;top:643px;width:81px;height:32px;background:#fff;border:1px solid #8c8f94;border-radius:3px;"></div>
<span class="t" style="left:819.34px;top:650px;font-size:14px;line-height:21px;color:#2c3338;letter-spacing:-1.00px;">50</span>
<div class="b" style="left:915px;top:643px;width:80px;height:32px;background:#fff;border:1px solid #8c8f94;border-radius:3px;"></div>
<div class="b" style="left:1019px;top:643px;width:32px;height:16px;background:#0074c2;border-radius:8px;"></div>
<div class="b" style="left:1037px;top:645px;width:12px;height:12px;background:#fff;border-radius:50%;"></div>
<div class="b" style="left:1019px;top:667px;width:115px;height:32px;background:#fff;border:1px solid #8c8f94;border-radius:3px;"></div>
<span class="t" style="left:1028.08px;top:674px;font-size:14px;line-height:21px;color:#2c3338;letter-spacing:-1.00px;">41</span>
<div class="b" style="left:1158px;top:643px;width:80px;height:32px;background:#fff;border:1px solid #8c8f94;border-radius:3px;"></div>
<span class="t" style="left:1164.86px;top:649px;font-size:14px;line-height:21px;color:#2c3338;letter-spacing:-0.45px;">In stock</span>
<svg style="left:1220.8px;top:656.5px" width="9" height="6" viewBox="0 0 9 6"><path d="M0.800 1l3.700 3.700L8.200 1" fill="none" stroke="#50575e" stroke-width="1.500"/></svg>
<span class="t" style="left:1261.75px;top:643px;font-size:13px;line-height:20px;color:#2c3338;letter-spacing:-0.14px;">22/01/2026, 17:01:03</span>
<div class="b" style="left:1406px;top:642.75px;width:101px;height:36px;background:#0074c2;border-radius:3px;"></div>
<span class="t" style="left:1418.06px;top:652px;font-size:13px;line-height:20px;color:#7db9e4;letter-spacing:-0.41px;">Save changes</span>
<span class="t" style="left:1417.58px;top:697px;font-size:13px;line-height:20px;color:#a7aaad;letter-spacing:-0.27px;">Reset row</span>
<div class="b" style="left:1406px;top:731px;width:87px;height:36px;background:#fff;border:1px solid #20689f;border-radius:2px;"></div>
<span class="t" style="left:1417.58px;top:741px;font-size:13px;line-height:20px;color:#1c68a3;letter-spacing:-0.02px;">Edit details</span>
<span class="t" style="left:230.01px;top:802px;font-size:13px;line-height:20px;color:#50575e;letter-spacing:0.25px;">1 product in total</span>
<div class="b" style="left:1305px;top:793px;width:73px;height:36px;background:#fff;border:1px solid #dcdcde;border-radius:2px;"></div>
<span class="t" style="left:1316.83px;top:803px;font-size:13px;line-height:20px;color:#a7aaad;letter-spacing:-0.21px;">Previous</span>
<span class="t" style="left:1389.33px;top:803px;font-size:13px;line-height:20px;color:#2c3338;letter-spacing:-0.19px;">Page 1 of 1</span>
<div class="b" style="left:1466px;top:793px;width:51px;height:36px;background:#fff;border:1px solid #dcdcde;border-radius:2px;"></div>
<span class="t" style="left:1477.58px;top:803px;font-size:13px;line-height:20px;color:#a7aaad;letter-spacing:0.26px;">Next</span>
</body>
</html>
